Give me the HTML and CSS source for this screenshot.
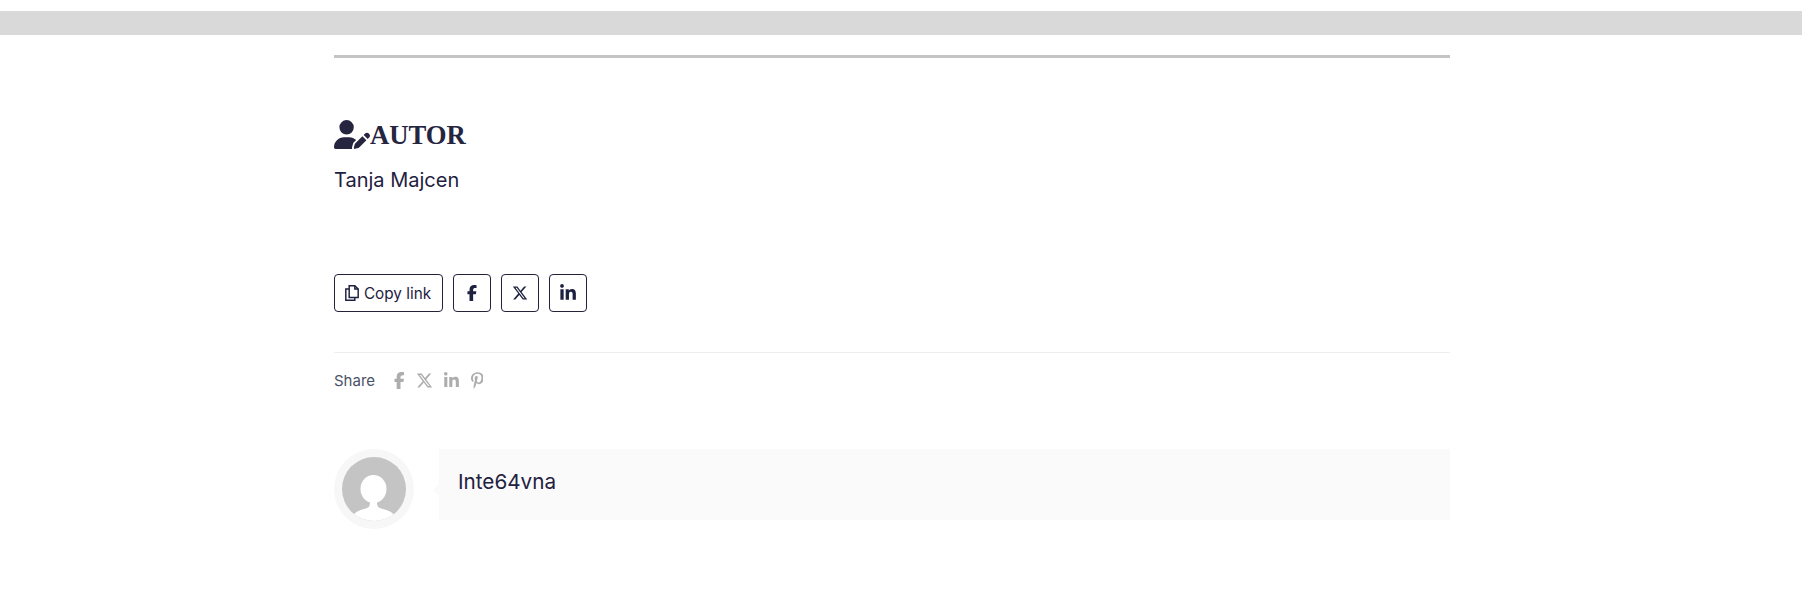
FILE: index.html
```html
<!DOCTYPE html>
<html lang="en">
<head>
    <meta charset="UTF-8">
    <meta name="viewport" content="width=device-width, initial-scale=1.0">
    <title>Autor</title>
    <link rel="stylesheet" href="styles.css">
</head>
<body>

<div class="top-bar"></div>

<div class="container">
    <div class="heavy-line"></div>

    <!-- Author -->
    <h2 class="author-title">
        <svg class="author-icon" viewBox="0 0 640 512"><path d="M224 256A128 128 0 1 0 224 0a128 128 0 1 0 0 256zm-45.7 48C79.8 304 0 383.8 0 482.3C0 498.7 13.3 512 29.7 512H322.8c-3.1-8.8-3.7-18.4-1.4-27.8l15-60.1c2.8-11.3 8.6-21.5 16.8-29.7l40.3-40.3c-32.1-31-75.7-50.1-123.9-50.1H178.3zm435.5-68.3c-15.6-15.6-40.9-15.6-56.6 0l-29.4 29.4 71 71 29.4-29.4c15.6-15.6 15.6-40.9 0-56.6l-14.4-14.4zM375.9 417c-4.1 4.1-7 9.2-8.4 14.9l-15 60.1c-1.4 5.5 .2 11.2 4.2 15.2s9.7 5.6 15.2 4.2l60.1-15c5.6-1.4 10.8-4.3 14.9-8.4L576.1 358.7l-71-71L375.9 417z"/></svg>
        <span>AUTOR</span>
    </h2>
    <p class="author-name">Tanja Majcen</p>

    <!-- Share buttons -->
    <div class="share-buttons">
        <a class="share-btn copy-btn" href="#">
            <svg class="copy-icon" viewBox="0 0 16 16"><path d="M5.5 1.5h5l3 3v7.5h-8z"/><path d="M10.5 1.5v3h3"/><path d="M5.5 4.500h-3v10h8v-2.500"/></svg>
            Copy link
        </a>
        <a class="share-btn" href="#"><svg class="btn-icon" viewBox="0 0 320 512"><path d="M80 299.3V512H196V299.3h86.5l18-97.8H196V166.9c0-51.7 20.3-71.5 72.7-71.5c16.3 0 29.4 .4 37 1.2V7.9C291.4 4 256.4 0 236.2 0C129.3 0 80 50.5 80 159.4v42.1H14v97.8H80z"/></svg></a>
        <a class="share-btn" href="#"><svg class="btn-icon" viewBox="0 0 512 512"><path d="M389.2 48h70.6L305.6 224.2 487 464H345L233.7 318.6 106.5 464H35.8L200.7 275.5 26.8 48H172.4L272.9 180.9 389.2 48zM364.4 421.8h39.1L151.1 88h-42L364.4 421.8z"/></svg></a>
        <a class="share-btn" href="#"><svg class="btn-icon btn-icon-large" viewBox="0 0 448 512"><path d="M100.28 448H7.4V148.9h92.88zM53.79 108.1C24.09 108.1 0 83.5 0 53.8a53.79 53.79 0 0 1 107.58 0c0 29.7-24.1 54.3-53.79 54.3zM447.9 448h-92.68V302.4c0-34.7-.7-79.2-48.29-79.2-48.29 0-55.69 37.7-55.69 76.7V448h-92.78V148.9h89.08v40.8h1.3c12.4-23.5 42.69-48.3 87.88-48.3 94 0 111.28 61.9 111.28 142.3V448z"/></svg></a>
    </div>

    <div class="share-row">
        <span class="share-label">Share</span>
        <svg class="row-icon" viewBox="0 0 320 512"><path d="M80 299.3V512H196V299.3h86.5l18-97.8H196V166.9c0-51.7 20.3-71.5 72.7-71.5c16.3 0 29.4 .4 37 1.2V7.9C291.4 4 256.4 0 236.2 0C129.3 0 80 50.5 80 159.4v42.1H14v97.8H80z"/></svg>
        <svg class="row-icon" viewBox="0 0 512 512"><path d="M389.2 48h70.6L305.6 224.2 487 464H345L233.7 318.6 106.5 464H35.8L200.7 275.5 26.8 48H172.4L272.9 180.9 389.2 48zM364.4 421.8h39.1L151.1 88h-42L364.4 421.8z"/></svg>
        <svg class="row-icon" viewBox="0 0 448 512"><path d="M100.28 448H7.4V148.9h92.88zM53.79 108.1C24.09 108.1 0 83.5 0 53.8a53.79 53.79 0 0 1 107.58 0c0 29.7-24.1 54.3-53.79 54.3zM447.9 448h-92.68V302.4c0-34.7-.7-79.2-48.29-79.2-48.29 0-55.69 37.7-55.69 76.7V448h-92.78V148.9h89.08v40.8h1.3c12.4-23.5 42.69-48.3 87.88-48.3 94 0 111.28 61.9 111.28 142.3V448z"/></svg>
        <svg class="row-icon" viewBox="0 0 384 512"><path d="M204 6.500C101.400 6.500 0 74.900 0 185.600 0 256 39.600 296 63.600 296c9.900 0 15.600-27.600 15.600-35.400 0-9.300-23.700-29.100-23.700-67.800 0-80.400 61.200-137.400 140.400-137.400 68.100 0 118.500 38.700 118.500 109.800 0 53.100-21.300 152.700-90.300 152.700-24.900 0-46.200-18-46.200-43.800 0-37.800 26.400-74.400 26.400-113.400 0-66.200-93.900-54.200-93.900 25.800 0 16.800 2.100 35.400 9.600 50.700-13.800 59.400-42 147.900-42 209.100 0 18.900 2.700 37.500 4.500 56.400 3.400 3.800 1.700 3.400 6.900 1.500 50.400-69 48.600-82.500 71.400-172.800 12.300 23.400 44.100 36 69.300 36 106.200 0 153.900-103.500 153.900-196.800C384 71.300 298.200 6.500 204 6.500z"/></svg>
    </div>

    <!-- Comment author -->
    <div class="comment">
        <div class="avatar">
            <svg viewBox="0 0 64 64">
                <defs><clipPath id="avatar-clip"><circle cx="32" cy="32" r="32"/></clipPath></defs>
                <circle cx="32" cy="32" r="32" fill="#c4c4c4"/>
                <g clip-path="url(#avatar-clip)" fill="#fff">
                    <ellipse cx="31.500" cy="32" rx="13" ry="14"/>
                    <path d="M8 66c1-8 6-12 14-14 5-1 6-3 6-7h7c0 4 1 6 6 7 8 2 14 6 16 14z"/>
                </g>
            </svg>
        </div>
        <div class="comment-box">Inte64vna</div>
    </div>
</div>

</body>
</html>
```

FILE: styles.css
```css
body {
    font-family: Inter, "Open Sans", sans-serif;
    margin: 0;
    padding: 0;
    background-color: #fff;
    color: #1f2141;
}

.top-bar {
    height: 24px;
    margin-top: 11px;
    background-color: #d9d9d9;
}

.container {
    width: 1116px;
    margin-left: 334px;
    padding-top: 20px;
}

.heavy-line {
    height: 3px;
    background-color: #c4c4c4;
}

.author-title {
    display: flex;
    align-items: center;
    margin: 61px 0 0;
    height: 32px;
    font-family: "Liberation Serif", serif;
    font-size: 26.700px;
    font-weight: 700;
    line-height: 32px;
    color: #25253f;
}

.author-icon {
    width: 36px;
    height: 29px;
    margin-top: -2px;
    fill: #25253f;
}

.author-name {
    margin: 15px 0 0;
    font-size: 20px;
    line-height: 28px;
}

.share-buttons {
    display: flex;
    gap: 10px;
    margin-top: 80px;
}

.share-btn {
    display: flex;
    align-items: center;
    justify-content: center;
    box-sizing: border-box;
    width: 38px;
    height: 38px;
    border: 1px solid #22223b;
    border-radius: 4px;
    color: #1f2141;
    text-decoration: none;
    font-size: 15.300px;
}

.copy-btn {
    width: 109px;
    gap: 3px;
    padding-right: 3px;
}

.copy-icon {
    width: 18px;
    height: 18px;
    fill: none;
    stroke: #1f2141;
    stroke-width: 1.300;
}

.btn-icon {
    width: 16px;
    height: 16px;
    fill: #1f2141;
}

.btn-icon-large {
    width: 18px;
    height: 18px;
}

.share-row {
    display: flex;
    align-items: center;
    gap: 11.500px;
    margin-top: 40px;
    padding-top: 15px;
    border-top: 1px solid #eee;
    height: 24px;
}

.share-label {
    font-size: 15px;
    color: #4a5268;
    margin-right: 7px;
}

.row-icon {
    height: 17px;
    width: auto;
    fill: #adadad;
}

.comment {
    display: flex;
    gap: 25px;
    margin-top: 57px;
}

.avatar {
    box-sizing: border-box;
    width: 80px;
    height: 80px;
    padding: 8px;
    border-radius: 50%;
    background-color: #f7f7f7;
}

.avatar svg {
    display: block;
}

.comment-box {
    position: relative;
    flex: 1;
    height: 71px;
    box-sizing: border-box;
    padding: 19px;
    background-color: #fafafa;
    font-size: 20.700px;
    line-height: 28px;
}

.comment-box::before {
    content: "";
    position: absolute;
    left: -6px;
    top: 35px;
    border-top: 6px solid transparent;
    border-bottom: 6px solid transparent;
    border-right: 6px solid #fafafa;
}
```
